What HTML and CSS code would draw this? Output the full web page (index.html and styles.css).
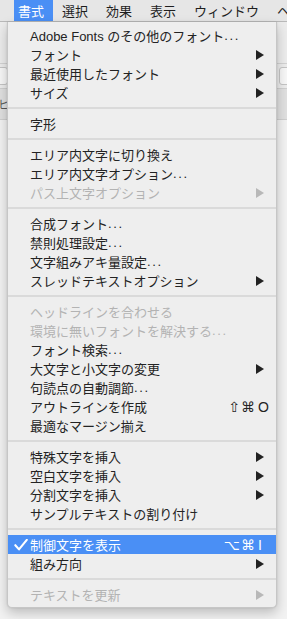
FILE: index.html
```html
<!DOCTYPE html>
<html lang="ja">
<head>
<meta charset="utf-8">
<title>書式メニュー</title>
<link rel="stylesheet" href="styles.css">
</head>
<body>
<div class="screen">
  <div class="menubar">
    <div class="title active">書式</div>
    <div class="title">選択</div>
    <div class="title">効果</div>
    <div class="title">表示</div>
    <div class="title">ウィンドウ</div>
    <div class="title">ヘ</div>
  </div>
  <div class="app">
    <div class="toolbar-top"></div>
    <div class="toolbar-fields">
      <div class="field field-left"></div>
      <div class="field field-right"></div>
    </div>
    <div class="panel-tabs"><span class="tab-text">ヒ</span></div>
    <div class="workspace"></div>
  </div>

  <div class="menu">
    <div class="item">Adobe Fonts のその他のフォント<span class="dots">...</span></div>
    <div class="item">フォント<span class="arrow"></span></div>
    <div class="item">最近使用したフォント<span class="arrow"></span></div>
    <div class="item">サイズ<span class="arrow"></span></div>
    <div class="sep"></div>
    <div class="item">字形</div>
    <div class="sep"></div>
    <div class="item">エリア内文字に切り換え</div>
    <div class="item">エリア内文字オプション<span class="dots">...</span></div>
    <div class="item disabled">パス上文字オプション<span class="arrow"></span></div>
    <div class="sep"></div>
    <div class="item">合成フォント<span class="dots">...</span></div>
    <div class="item">禁則処理設定<span class="dots">...</span></div>
    <div class="item">文字組みアキ量設定<span class="dots">...</span></div>
    <div class="item">スレッドテキストオプション<span class="arrow"></span></div>
    <div class="sep"></div>
    <div class="item disabled">ヘッドラインを合わせる</div>
    <div class="item disabled">環境に無いフォントを解決する<span class="dots">...</span></div>
    <div class="item">フォント検索<span class="dots">...</span></div>
    <div class="item">大文字と小文字の変更<span class="arrow"></span></div>
    <div class="item">句読点の自動調節<span class="dots">...</span></div>
    <div class="item">アウトラインを作成<span class="shortcut"><span class="mods">⇧⌘</span><span class="key">O</span></span></div>
    <div class="item">最適なマージン揃え</div>
    <div class="sep"></div>
    <div class="item">特殊文字を挿入<span class="arrow"></span></div>
    <div class="item">空白文字を挿入<span class="arrow"></span></div>
    <div class="item">分割文字を挿入<span class="arrow"></span></div>
    <div class="item">サンプルテキストの割り付け</div>
    <div class="sep"></div>
    <div class="item selected">
      <svg class="check" width="14" height="12" viewBox="0 0 14 12"><polyline points="1.3,6.2 5,10.4 12.8,0.9" fill="none" stroke="#ffffff" stroke-width="2.1" stroke-linecap="round" stroke-linejoin="round"/></svg>
      制御文字を表示<span class="shortcut"><span class="mods">⌥⌘</span><span class="key">I</span></span>
    </div>
    <div class="item">組み方向<span class="arrow"></span></div>
    <div class="sep"></div>
    <div class="item disabled">テキストを更新<span class="arrow"></span></div>
  </div>
</div>
</body>
</html>
```

FILE: styles.css
```css
html, body {
  margin: 0;
  padding: 0;
}

body {
  width: 287px;
  height: 619px;
  overflow: hidden;
  background: #f1f1f1;
  font-family: "Liberation Sans", "Noto Sans CJK JP", sans-serif;
  font-size: 13px;
  color: #232323;
}

.screen {
  position: relative;
  width: 287px;
  height: 619px;
  overflow: hidden;
  display: flex;
  flex-direction: column;
}

/* ---- menu bar ---- */
.menubar {
  height: 22px;
  flex: none;
  display: flex;
  align-items: stretch;
  background: #e6e6e6;
  border-bottom: 1px solid #b9b9b9;
  box-sizing: border-box;
  padding-left: 14px;
}

.title {
  display: flex;
  align-items: center;
  padding: 0 9px 0 4px;
  font-size: 13px;
  color: #1e1e1e;
  white-space: nowrap;
}

.title + .title {
  padding: 0 9px 0 9px;
}

.title.active {
  background: #4a8ff5;
  color: #ffffff;
}

/* ---- app behind the menu ---- */
.app {
  flex: 1;
  display: flex;
  flex-direction: column;
}

.toolbar-top {
  height: 41px;
  background: #ececec;
  border-bottom: 1px solid #d2d2d2;
}

.toolbar-fields {
  height: 24px;
  background: #ececec;
  display: flex;
  justify-content: space-between;
  align-items: center;
  border-bottom: 1px solid #cfcfcf;
}

.field {
  height: 16px;
  background: #f7f7f7;
  border: 1px solid #c4c4c4;
  border-radius: 3px;
}

.field-left {
  width: 40px;
  margin-left: -34px;
}

.field-right {
  width: 40px;
  margin-right: -34px;
}

.panel-tabs {
  height: 30px;
  background: #e0e0e0;
  display: flex;
  align-items: center;
  border-bottom: 1px solid #cfcfcf;
}

.tab-text {
  margin-left: -2px;
  font-size: 11px;
  color: #555;
}

.workspace {
  flex: 1;
  background: #f2f2f2;
}

/* ---- dropdown menu (overlay) ---- */
.menu {
  position: absolute;
  left: 7px;
  top: 22px;
  width: 270px;
  height: 586px;
  box-sizing: border-box;
  padding: 4px 0;
  background: #eeeeee;
  border: 1px solid #c6c6c6;
  border-top: none;
  border-radius: 0 0 5px 5px;
  box-shadow: 0 5px 12px rgba(0, 0, 0, 0.22), 0 0 2px rgba(0, 0, 0, 0.12);
  display: flex;
  flex-direction: column;
}

.item {
  position: relative;
  height: 19px;
  flex: none;
  display: flex;
  align-items: center;
  padding-left: 22px;
  white-space: nowrap;
  color: #232323;
}

.item.disabled {
  color: #b3b3b3;
}

.item.selected {
  background: #4a8ff5;
  color: #ffffff;
}

.dots {
  letter-spacing: 1.6px;
}

.sep {
  height: 12px;
  flex: none;
  display: flex;
  align-items: center;
}

.sep::before {
  content: "";
  flex: 1;
  height: 2px;
  background: #dadada;
}

.arrow {
  margin-left: auto;
  margin-right: 12px;
  width: 0;
  height: 0;
  border-left: 8px solid #222222;
  border-top: 5px solid transparent;
  border-bottom: 5px solid transparent;
}

.disabled .arrow {
  border-left-color: #b8b8b8;
}

.shortcut {
  margin-left: auto;
  margin-right: 8px;
  display: flex;
  align-items: center;
  font-family: "DejaVu Sans", "Liberation Sans", sans-serif;
  font-size: 14px;
}

.mods {
  letter-spacing: 1px;
}

.key {
  width: 10px;
  margin-left: 2px;
  font-family: "Liberation Sans", sans-serif;
}

.check {
  position: absolute;
  left: 6px;
  top: 4px;
}
```
